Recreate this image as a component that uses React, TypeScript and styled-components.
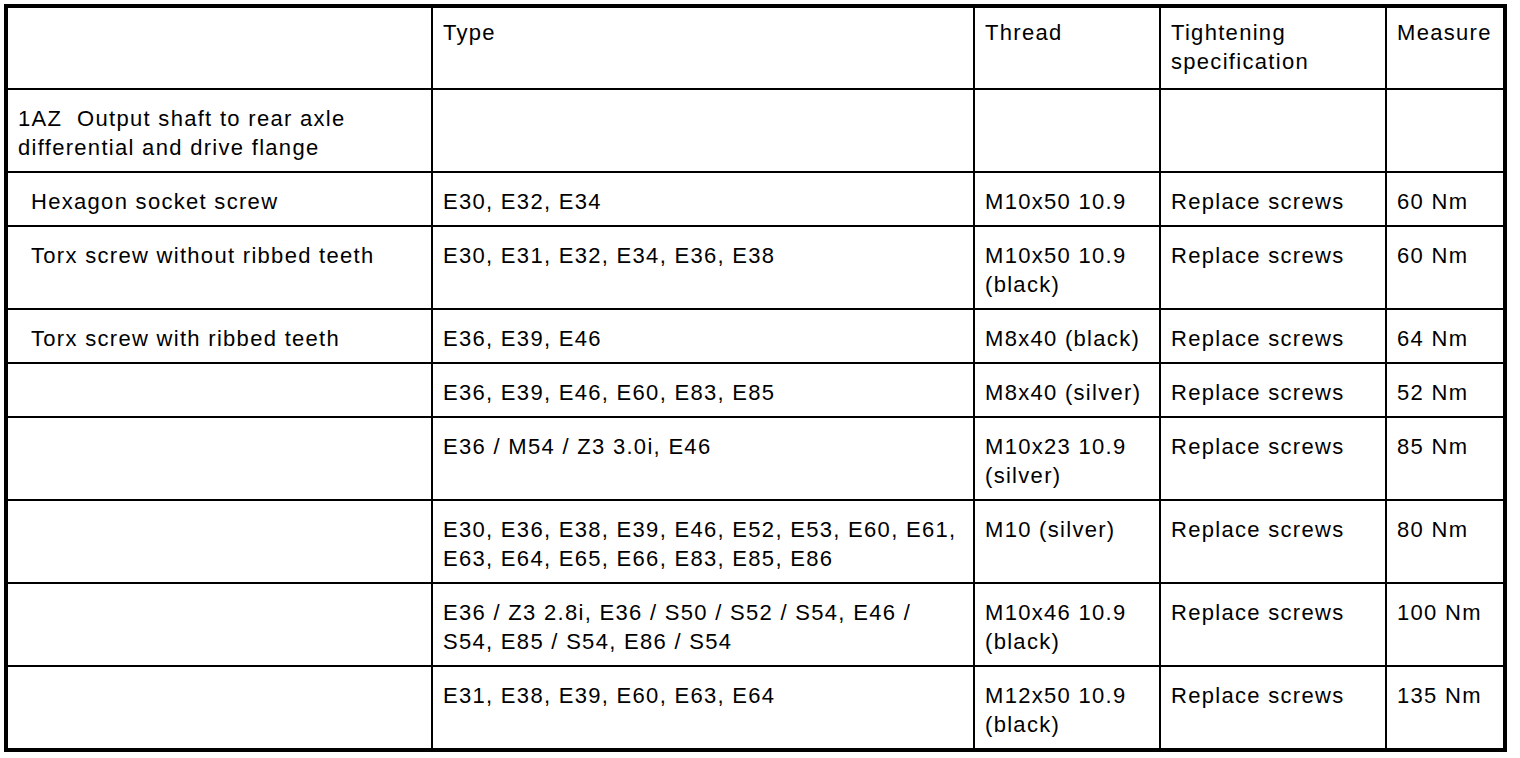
import React from "react";
import styled, { createGlobalStyle } from "styled-components";

const Global = createGlobalStyle`
  html, body { margin: 0; padding: 0; background: #ffffff; }
  body { font-family: "Liberation Sans", Arial, Helvetica, sans-serif; color: #000; }
`;

const Page = styled.div`
  padding: 4px;
`;

const Table = styled.div`
  width: 1495px;
  border: 4px solid #000;
  display: grid;
  grid-template-columns: 425px 542px 186px 226px 116px;
  font-size: 22px;
  letter-spacing: 1.3px;
  line-height: 29px;
`;

const Cell = styled.div<{ $last?: boolean; $bottom?: boolean; $head?: boolean; $indent?: boolean }>`
  box-sizing: border-box;
  border-right: ${(p) => (p.$last ? "none" : "2px solid #000")};
  border-bottom: ${(p) => (p.$bottom ? "none" : "2px solid #000")};
  padding: ${(p) => (p.$head ? "10px 6px 12px" : "14px 6px 9px")};
  padding-left: ${(p) => (p.$indent ? "23px" : "10px")};
  white-space: nowrap;
`;

type Row = { label: React.ReactNode; indent?: boolean; type: React.ReactNode; thread: React.ReactNode; spec: string; measure: string };

const rows: Row[] = [
  { label: <>1AZ&nbsp; Output shaft to rear axle<br />differential and drive flange</>, type: "", thread: "", spec: "", measure: "" },
  { label: "Hexagon socket screw", indent: true, type: "E30, E32, E34", thread: "M10x50 10.9", spec: "Replace screws", measure: "60 Nm" },
  { label: "Torx screw without ribbed teeth", indent: true, type: "E30, E31, E32, E34, E36, E38", thread: <>M10x50 10.9<br />(black)</>, spec: "Replace screws", measure: "60 Nm" },
  { label: "Torx screw with ribbed teeth", indent: true, type: "E36, E39, E46", thread: "M8x40 (black)", spec: "Replace screws", measure: "64 Nm" },
  { label: "", type: "E36, E39, E46, E60, E83, E85", thread: "M8x40 (silver)", spec: "Replace screws", measure: "52 Nm" },
  { label: "", type: "E36 / M54 / Z3 3.0i, E46", thread: <>M10x23 10.9<br />(silver)</>, spec: "Replace screws", measure: "85 Nm" },
  { label: "", type: <>E30, E36, E38, E39, E46, E52, E53, E60, E61,<br />E63, E64, E65, E66, E83, E85, E86</>, thread: "M10 (silver)", spec: "Replace screws", measure: "80 Nm" },
  { label: "", type: <>E36 / Z3 2.8i, E36 / S50 / S52 / S54, E46 /<br />S54, E85 / S54, E86 / S54</>, thread: <>M10x46 10.9<br />(black)</>, spec: "Replace screws", measure: "100 Nm" },
  { label: "", type: "E31, E38, E39, E60, E63, E64", thread: <>M12x50 10.9<br />(black)</>, spec: "Replace screws", measure: "135 Nm" },
];

export default function App() {
  return (
    <>
      <Global />
      <Page>
        <Table>
          <Cell $head></Cell>
          <Cell $head>Type</Cell>
          <Cell $head>Thread</Cell>
          <Cell $head>Tightening<br />specification</Cell>
          <Cell $head $last>Measure</Cell>
          {rows.map((r, i) => {
            const bottom = i === rows.length - 1;
            return (
              <React.Fragment key={i}>
                <Cell $bottom={bottom} $indent={r.indent}>{r.label}</Cell>
                <Cell $bottom={bottom}>{r.type}</Cell>
                <Cell $bottom={bottom}>{r.thread}</Cell>
                <Cell $bottom={bottom}>{r.spec}</Cell>
                <Cell $bottom={bottom} $last>{r.measure}</Cell>
              </React.Fragment>
            );
          })}
        </Table>
      </Page>
    </>
  );
}
